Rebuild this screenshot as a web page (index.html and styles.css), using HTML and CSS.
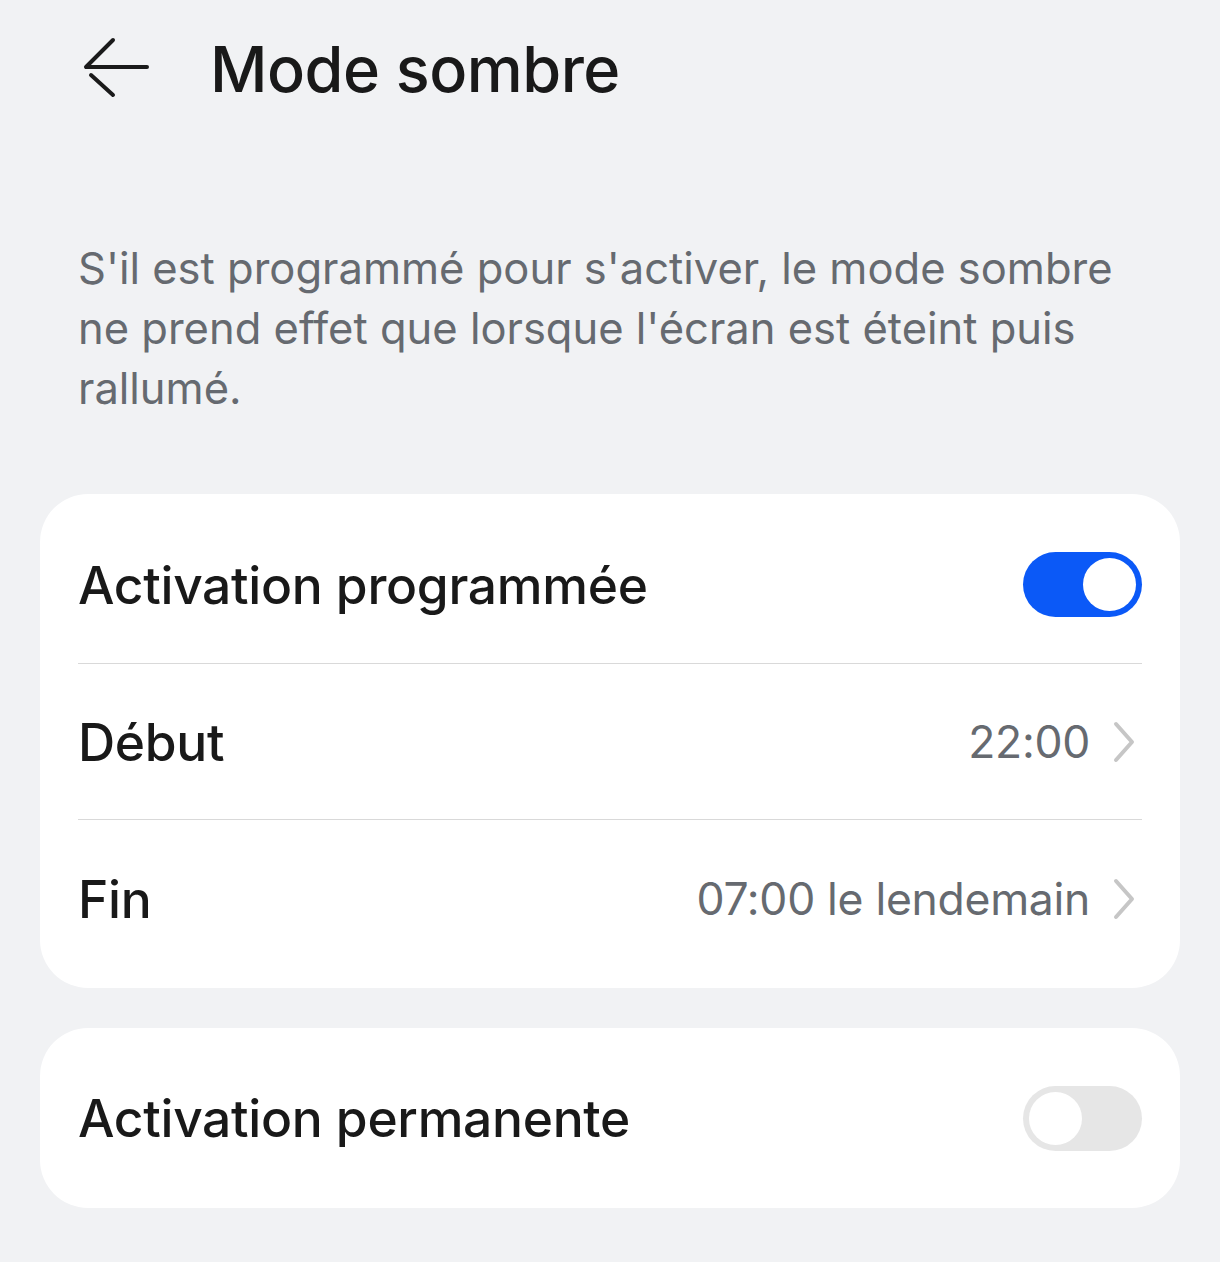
FILE: index.html
```html
<!DOCTYPE html>
<html lang="fr">
<head>
<meta charset="utf-8">
<link rel="stylesheet" href="styles.css">
</head>
<body>
<div class="page">
  <header class="topbar">
    <svg class="back" width="70" height="64" viewBox="0 0 70 64" aria-hidden="true">
      <path d="M31 4 L4 31 L65 31 M9 39 L31 59" fill="none" stroke="#1a1a1a" stroke-width="4" stroke-linecap="round" stroke-linejoin="round"/>
    </svg>
    <h1 class="title">Mode sombre</h1>
  </header>

  <p class="desc">S'il est programmé pour s'activer, le mode sombre ne prend effet que lorsque l'écran est éteint puis rallumé.</p>

  <section class="card">
    <div class="row">
      <span class="label">Activation programmée</span>
      <span class="toggle on"><span class="knob"></span></span>
    </div>
    <div class="row">
      <span class="label">Début</span>
      <span class="value">22:00
        <svg class="chev" width="24" height="42" viewBox="0 0 24 42" aria-hidden="true"><path d="M4 3 L20 21 L4 39" fill="none" stroke="#c6c6c6" stroke-width="4" stroke-linecap="round" stroke-linejoin="round"/></svg>
      </span>
    </div>
    <div class="row">
      <span class="label">Fin</span>
      <span class="value">07:00 le lendemain
        <svg class="chev" width="24" height="42" viewBox="0 0 24 42" aria-hidden="true"><path d="M4 3 L20 21 L4 39" fill="none" stroke="#c6c6c6" stroke-width="4" stroke-linecap="round" stroke-linejoin="round"/></svg>
      </span>
    </div>
  </section>

  <section class="card single">
    <div class="row">
      <span class="label">Activation permanente</span>
      <span class="toggle off"><span class="knob"></span></span>
    </div>
  </section>
</div>
</body>
</html>
```

FILE: styles.css
```css
* { box-sizing: border-box; }
html, body { margin: 0; padding: 0; }
body {
  background: #f1f2f4;
  font-family: Inter, "Noto Sans", sans-serif;
  color: #191919;
  width: 1220px;
  height: 1262px;
  overflow: hidden;
}
.page { padding: 0 40px; }
.topbar {
  display: flex;
  align-items: center;
  height: 135px;
  padding-left: 42px;
  padding-top: 1px;
  padding-bottom: 1px;
}
.back { overflow: visible; }
.title {
  margin: 0 0 0 58px;
  font-weight: 500;
  font-size: 63px;
  letter-spacing: -0.5px;
  color: #191919;
  position: relative;
  top: 1px;
}
.desc {
  margin: 103px 0 0 38px;
  width: 1050px;
  font-size: 43.5px;
  line-height: 60px;
  color: #666a70;
  letter-spacing: 0;
}
.card {
  margin-top: 76px;
  background: #fff;
  border-radius: 48px;
  padding: 0 38px;
}
.card.single { margin-top: 40px; }
.row {
  display: flex;
  align-items: center;
  justify-content: space-between;
  height: 156px;
  border-top: 1px solid #d9d9d9;
}
.row:first-child { border-top: none; height: 169px; padding-top: 16px; padding-bottom: 4px; }
.row:last-child { height: 169px; padding-bottom: 10px; }
.card.single .row { height: 180px; padding: 0; }
.label {
  font-size: 51.5px;
  font-weight: 500;
  letter-spacing: -0.3px;
  color: #191919;
}
.value {
  display: flex;
  align-items: center;
  gap: 22px;
  font-size: 44.5px;
  color: #666a70;
  letter-spacing: -0.3px;
}
.chev { margin-right: 6px; }
.toggle {
  display: flex;
  align-items: center;
  width: 119px;
  height: 65px;
  border-radius: 33px;
  padding: 6px;
}
.toggle .knob {
  width: 53px;
  height: 53px;
  border-radius: 50%;
  background: #fff;
}
.toggle.on { background: #0b59f7; justify-content: flex-end; }
.toggle.off { background: #e6e6e6; justify-content: flex-start; }
```
